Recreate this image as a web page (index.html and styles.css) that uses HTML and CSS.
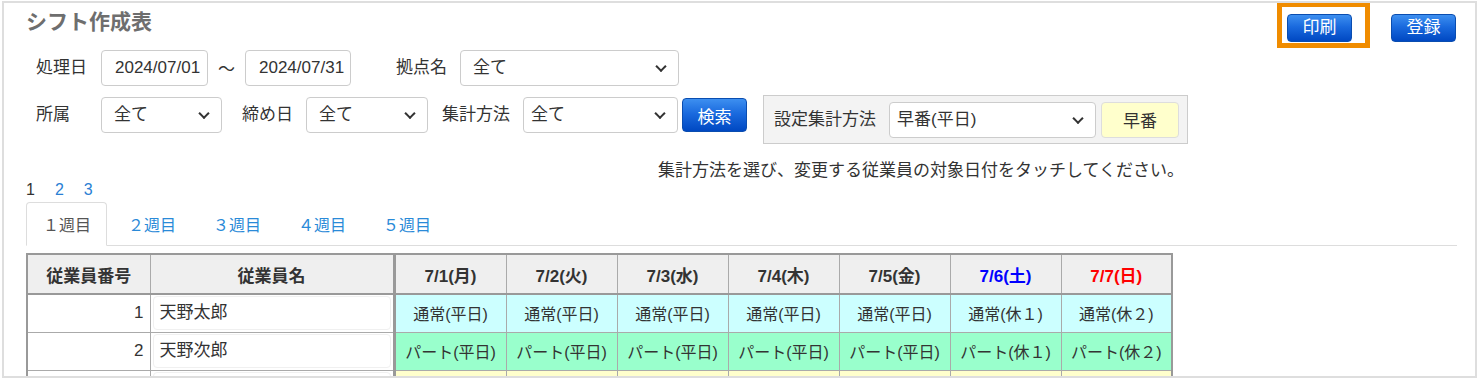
FILE: index.html
```html
<!DOCTYPE html>
<html lang="ja">
<head>
<meta charset="utf-8">
<title>シフト作成表</title>
<link rel="stylesheet" href="styles.css">
</head>
<body>
<div class="frame">
  <header class="top">
    <h1 class="title">シフト作成表</h1>
    <div class="actions">
      <span class="marked"><button class="btn btn-top">印刷</button></span>
      <button class="btn btn-top">登録</button>
    </div>
  </header>

  <div class="panel">
    <div class="frow frow1">
      <span class="lbl lbl-first">処理日</span>
      <input class="inp inp-date1" type="text" value="2024/07/01">
      <span class="tilde">～</span>
      <input class="inp inp-date2" type="text" value="2024/07/31">
      <span class="lbl lbl-base">拠点名</span>
      <span class="sel sel-base"><span class="sel-text">全て</span></span>
    </div>
    <div class="frow frow2">
      <span class="lbl lbl-first">所属</span>
      <span class="sel sel-dept"><span class="sel-text">全て</span></span>
      <span class="lbl lbl-mid">締め日</span>
      <span class="sel sel-close"><span class="sel-text">全て</span></span>
      <span class="lbl lbl-mid2">集計方法</span>
      <span class="sel sel-method tight"><span class="sel-text">全て</span></span>
      <button class="btn btn-search">検索</button>
      <div class="setbox">
        <span class="lbl">設定集計方法</span>
        <span class="sel sel-set tight"><span class="sel-text">早番(平日)</span></span>
        <button class="btn-shift">早番</button>
      </div>
    </div>
    <p class="notice">集計方法を選び、変更する従業員の対象日付をタッチしてください。</p>
  </div>

  <div class="pager">
    <span class="pg current">1</span>
    <a class="pg">2</a>
    <a class="pg">3</a>
  </div>

  <ul class="tabs">
    <li class="tab active">１週目</li>
    <li class="tab">２週目</li>
    <li class="tab">３週目</li>
    <li class="tab">４週目</li>
    <li class="tab">５週目</li>
  </ul>

  <table class="shift">
    <colgroup>
      <col class="c-no"><col class="c-name">
      <col class="c-day1"><col class="c-day"><col class="c-day"><col class="c-day"><col class="c-day"><col class="c-day"><col class="c-day">
    </colgroup>
    <thead>
      <tr>
        <th>従業員番号</th>
        <th>従業員名</th>
        <th class="first-day">7/1(月)</th>
        <th>7/2(火)</th>
        <th>7/3(水)</th>
        <th>7/4(木)</th>
        <th>7/5(金)</th>
        <th class="sat">7/6(土)</th>
        <th class="sun">7/7(日)</th>
      </tr>
    </thead>
    <tbody>
      <tr class="r-normal">
        <td class="no">1</td>
        <td class="name"><div class="name-box">天野太郎</div></td>
        <td class="first-day">通常(平日)</td>
        <td>通常(平日)</td>
        <td>通常(平日)</td>
        <td>通常(平日)</td>
        <td>通常(平日)</td>
        <td>通常(休１)</td>
        <td>通常(休２)</td>
      </tr>
      <tr class="r-part">
        <td class="no">2</td>
        <td class="name"><div class="name-box">天野次郎</div></td>
        <td class="first-day">パート(平日)</td>
        <td>パート(平日)</td>
        <td>パート(平日)</td>
        <td>パート(平日)</td>
        <td>パート(平日)</td>
        <td>パート(休１)</td>
        <td>パート(休２)</td>
      </tr>
      <tr class="r-early">
        <td class="no"></td>
        <td class="name"><div class="name-box"></div></td>
        <td class="first-day"></td>
        <td></td>
        <td></td>
        <td></td>
        <td></td>
        <td></td>
        <td></td>
      </tr>
    </tbody>
  </table>
</div>
</body>
</html>
```

FILE: styles.css
```css
* { box-sizing: border-box; }

html, body {
  margin: 0;
  padding: 0;
  background: #fff;
}

body {
  font-family: "Liberation Sans", "Noto Sans CJK JP", sans-serif;
  color: #333;
  font-size: 17px;
}

.frame {
  position: relative;
  margin: 1px 0 0 2px;
  width: 1475px;
  height: 377px;
  border: 2px solid #dedede;
  padding: 0 18px 0 22px;
  overflow: hidden;
  background: #fff;
}

/* header */
.top {
  display: flex;
  justify-content: space-between;
  align-items: flex-start;
  height: 46px;
}

.title {
  margin: 0;
  padding-top: 4px;
  font-size: 21px;
  line-height: 30px;
  font-weight: 700;
  color: #6e6e6e;
}

.actions {
  display: flex;
  gap: 39px;
  margin-top: 11px;
  margin-right: 1px;
}

.marked {
  position: relative;
  display: block;
}

.marked::before {
  content: "";
  position: absolute;
  top: -12px;
  left: -10px;
  right: -18px;
  bottom: -6px;
  border: 5px solid #f08c00;
  pointer-events: none;
}

.btn {
  display: block;
  font-family: inherit;
  color: #fff;
  font-size: 17px;
  border: 1px solid #0a4db0;
  border-radius: 4px;
  background: linear-gradient(to bottom, #3d8ff0 0%, #1a6ade 45%, #0048c2 100%);
  padding: 0;
  cursor: pointer;
}

.btn-top {
  width: 65px;
  height: 28px;
  line-height: 26px;
}

/* filter panel */
.panel {
  width: fit-content;
  padding-left: 10px;
}

.frow {
  display: flex;
  align-items: flex-start;
}

.frow1 {
  margin-top: 1px;
  align-items: center;
  height: 36px;
}

.frow2 {
  margin-top: 9px;
}

.frow2 > .lbl,
.frow2 > .sel {
  margin-top: 2px;
}

.lbl {
  display: block;
  height: 36px;
  line-height: 36px;
  white-space: nowrap;
  color: #333;
}

.lbl-first { width: 65px; }
.lbl-base { margin-left: 45px; margin-right: 13px; }
.lbl-mid { margin-left: 20px; margin-right: 13px; }
.lbl-mid2 { margin-left: 14px; margin-right: 13px; }

.inp {
  display: block;
  height: 36px;
  border: 1px solid #ccc;
  border-radius: 4px;
  padding: 0 2px 0 13px;
  font-family: inherit;
  font-size: 17px;
  color: #333;
  background: #fff;
}

.inp-date1 { width: 107px; }
.inp-date2 { width: 106px; }

.tilde {
  display: block;
  margin: 0 10px;
  font-family: "Noto Sans CJK JP", sans-serif;
  line-height: 36px;
}

.sel {
  position: relative;
  display: block;
  height: 36px;
  border: 1px solid #ccc;
  border-radius: 4px;
  background: #fff;
  padding: 0 30px 0 12px;
  line-height: 34px;
}

.sel.tight { padding-left: 7px; }

.sel::after {
  content: "";
  position: absolute;
  right: 13px;
  top: 50%;
  width: 6px;
  height: 6px;
  border-right: 2px solid #333;
  border-bottom: 2px solid #333;
  transform: translateY(-70%) rotate(45deg);
}

.sel-base { width: 219px; }
.sel-dept { width: 121px; }
.sel-close { width: 122px; }
.sel-method { width: 155px; }
.sel-set { width: 207px; }

.btn-search {
  width: 65px;
  height: 34px;
  margin-left: 4px;
  margin-top: 3px;
}

.setbox {
  display: flex;
  align-items: center;
  margin-left: 16px;
  height: 49px;
  padding: 0 8px 0 10px;
  background: #f3f3f3;
  border: 1px solid #ccc;
}

.setbox .lbl { margin-right: 13px; }

.btn-shift {
  width: 78px;
  height: 36px;
  margin-left: 5px;
  border: 1px solid #ddd;
  border-radius: 4px;
  background: #ffffcc;
  color: #333;
  font-family: inherit;
  font-size: 17px;
  padding: 0;
}

.notice {
  margin: 17px 0 0;
  padding-right: 4px;
  text-align: right;
  line-height: 20px;
  color: #333;
}

/* pager */
.pager {
  display: flex;
  gap: 20px;
  font-size: 16px;
  line-height: 18px;
}

.pg { color: #2a7fd4; }
.pg.current { color: #333; }

/* tabs */
.tabs {
  display: flex;
  list-style: none;
  margin: 3px 0 0;
  padding: 0;
  border-bottom: 1px solid #ddd;
}

.tab {
  height: 44px;
  line-height: 42px;
  padding: 0 15px 0 16px;
  margin-right: 4px;
  margin-bottom: -1px;
  border: 1px solid transparent;
  border-radius: 4px 4px 0 0;
  font-size: 16px;
  font-family: "Noto Sans CJK JP", sans-serif;
  color: #2a8ad8;
}

.tab.active {
  color: #555;
  background: #fff;
  border-color: #ddd;
  border-bottom-color: #fff;
}

/* shift table */
.shift {
  margin-top: 7px;
  border-collapse: collapse;
  table-layout: fixed;
  width: 1147px;
  border: 2px solid #999;
}

.c-no { width: 123px; }
.c-name { width: 244px; }
.c-day1 { width: 112px; }
.c-day { width: 111px; }

.shift th {
  height: 40px;
  background: #efefef;
  border: 1px solid #aaa;
  border-bottom: 2px solid #999;
  font-size: 17px;
  font-weight: 700;
  color: #333;
  text-align: center;
  padding: 0;
}

.shift th.sat { color: #0000ff; }
.shift th.sun { color: #ff0000; }

.shift td {
  height: 38px;
  border: 1px solid #aaa;
  text-align: center;
  font-size: 16px;
  padding: 0;
  color: #333;
}

.shift .first-day { border-left: 3px solid #999; }

.shift td.no {
  text-align: right;
  padding-right: 6px;
  font-size: 17px;
  background: #fff;
}

.shift td.name {
  padding: 1px 2px;
  background: #fff;
  text-align: left;
}

.name-box {
  height: 34px;
  line-height: 32px;
  padding: 0 6px;
  border: 1px solid #f0f0f0;
  border-radius: 4px;
  font-size: 17px;
}

.r-normal td { background: #ccffff; }
.r-part td { background: #99ffcc; }
.r-early td { background: #ffffcc; }
```
